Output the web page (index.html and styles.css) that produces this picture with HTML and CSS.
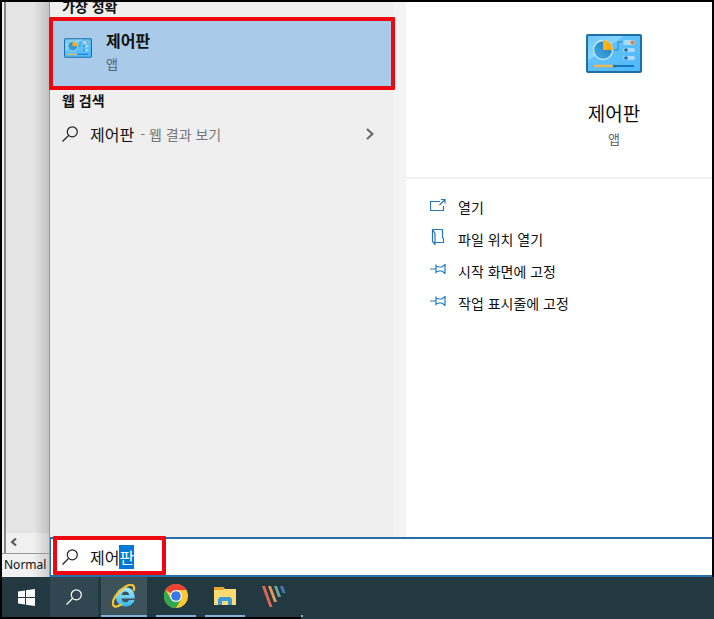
FILE: index.html
```html
<!DOCTYPE html>
<html lang="ko">
<head>
<meta charset="utf-8">
<title>제어판 - 검색</title>
<link rel="stylesheet" href="styles.css">
</head>
<body>
<svg class="defs" aria-hidden="true">
  <defs>
    <linearGradient id="board" x1="0" y1="0" x2="1" y2="1"><stop offset="0" stop-color="#6bc6f6"/><stop offset=".35" stop-color="#86d6ff"/><stop offset=".36" stop-color="#62c2f8"/><stop offset="1" stop-color="#4db8fb"/></linearGradient>
    <linearGradient id="pie" x1="0" y1="1" x2="1" y2="0"><stop offset="0" stop-color="#4db0e8"/><stop offset="1" stop-color="#1777b8"/></linearGradient>
    <linearGradient id="ie" x1="0" y1="0" x2="0" y2="1"><stop offset="0" stop-color="#a5ecff"/><stop offset="1" stop-color="#35b6ee"/></linearGradient>
    <symbol id="panel-icon" viewBox="0 0 56 39">
      <rect x="1" y="1" width="54" height="37" rx="1" fill="url(#board)" stroke="#1d6fa5" stroke-width="2"/>
      <circle cx="17" cy="16" r="9.500" fill="url(#pie)" stroke="#c5eaff" stroke-width="1.300"/>
      <path d="M17 16V6a10 10 0 0 1 10 10z" fill="#fdaf17"/>
      <path d="M28 16h4V8h5" fill="none" stroke="#2787c4" stroke-width="1"/>
      <g fill="#a9dcfa"><rect x="37" y="6" width="12" height="5" rx="2.500"/><rect x="37" y="14" width="12" height="4" rx="2"/><rect x="37" y="22" width="12" height="4" rx="2"/></g>
      <circle cx="46.500" cy="8.500" r="2" fill="#ef7c26"/><g fill="#146aaa"><circle cx="40" cy="16" r="1.800"/><circle cx="40" cy="24" r="1.800"/></g>
      <path d="M8 32h19" stroke="#e9b75d" stroke-width="2.500"/><path d="M29 32h19" stroke="#1675bd" stroke-width="2"/><circle cx="28.500" cy="32" r="1.600" fill="#1675bd"/>
    </symbol>
    <symbol id="search-icon" viewBox="0 0 16 16"><path d="M6.300 9.800.5 15.500" /><circle cx="10.300" cy="5.800" r="5"/></symbol>
    <symbol id="pin-icon" viewBox="0 0 16 10"><path d="M0 5h6M6 .5v9M6 2l3 1h3l3-2.500v9L12 7H9L6 8"/></symbol>
  </defs>
</svg>
<div class="screen">
  <div class="workspace">
    <div class="editor" aria-hidden="true">
      <div class="document"></div>
      <div class="scrollbar"><svg width="8" height="8" viewBox="0 0 8 8"><path d="M6 .5 2 4l4 3.500"/></svg></div>
      <div class="status">Normal t</div>
    </div>
    <main class="search">
      <div class="content">
        <section class="results">
          <h2 class="group first">가장 정확</h2>
          <button class="best">
            <svg class="small-panel"><use href="#panel-icon"/></svg>
            <span class="labels"><b>제어판</b><small>앱</small></span>
          </button>
          <h2 class="group">웹 검색</h2>
          <button class="web">
            <svg class="glass"><use href="#search-icon"/></svg>
            <span class="term">제어판</span><span class="hint">- 웹 결과 보기</span>
            <svg class="chevron" viewBox="0 0 8 12"><path d="m1 1 5.500 5L1 11"/></svg>
          </button>
        </section>
        <section class="details">
          <header class="hero">
            <svg class="large-panel"><use href="#panel-icon"/></svg>
            <h1>제어판</h1>
            <p>앱</p>
          </header>
          <nav class="actions">
            <button><svg viewBox="0 0 16 16"><path d="M10 4.500H.5v9h13V9M9.500 8 15 2.500M11 2.500h4v4"/></svg>열기</button>
            <button><svg viewBox="0 0 16 16"><path d="M5 13.500h8.500v-4l-1-1V.5h-10M2.500.5v12L5 15.500v-11z"/></svg>파일 위치 열기</button>
            <button><svg viewBox="0 -3 16 16"><use href="#pin-icon" width="16" height="10"/></svg>시작 화면에 고정</button>
            <button><svg viewBox="0 -3 16 16"><use href="#pin-icon" width="16" height="10"/></svg>작업 표시줄에 고정</button>
          </nav>
        </section>
      </div>
      <div class="query">
        <label class="field" for="q"><svg class="glass"><use href="#search-icon"/></svg><input id="q" type="text" value="제어판" aria-label="검색" autocomplete="off" spellcheck="false" autofocus></label>
      </div>
    </main>
  </div>
  <footer class="taskbar">
    <div class="apps">
      <button class="start" aria-label="시작"><svg width="17" height="17" viewBox="0 0 17 17"><path fill="#fff" d="M0 2.500 7 1.500V8H0zM8 1.300 17 0v8H8zM0 9h7v6.500l-7-1zM8 9h9v8l-9-1.300z"/></svg></button>
      <button class="find" aria-label="검색"><svg class="glass"><use href="#search-icon"/></svg></button>
      <button class="app active" aria-label="Internet Explorer"><svg width="24" height="24" viewBox="0 0 24 24"><path d="M22.500 16c-1.300 4-4.500 6.500-9 6.500-5.500 0-9.500-4-9.500-9.500S8 3.500 13.500 3.500c6 0 9.500 4.500 9.200 11H9.500c.3 2.500 1.800 3.800 4.200 3.800 1.500 0 2.700-.8 3.300-2.300zM9.600 11h7.600c-.2-2.300-1.500-3.500-3.700-3.500S10 8.700 9.600 11z" fill="url(#ie)"/><path d="M21.500 7C23.500 1.500 20-1.500 13 3 4 9-1 18 1.500 21.500c1.500 2 5 .8 8.500-1.500" fill="none" stroke="#f5c52d" stroke-width="2.200"/></svg></button>
      <button class="app" aria-label="Chrome"><svg width="24" height="24" viewBox="0 0 24 24"><circle cx="12" cy="12" r="12" fill="#fcc934"/><path d="M12 12 1.600 6A12 12 0 0 1 22.400 6H12z" fill="#ea4335"/><path d="M1.600 6A12 12 0 0 0 12 24l5.200-9L12 12 6.800 15z" fill="#2da94f"/><circle cx="12" cy="12" r="6" fill="#fff"/><circle cx="12" cy="12" r="4.800" fill="#3978e6"/></svg></button>
      <button class="app" aria-label="파일 탐색기"><svg width="22" height="18" viewBox="0 0 22 18"><path d="M0 0h9l2 2h11v16H0z" fill="#ffda72"/><path d="M0 0h9l1.500 1.500L9 3H0z" fill="#e3a52d"/><path d="M4 18v-6l2-2h10l2 2v6h-4v-4H8v4z" fill="#399bd9"/></svg></button>
      <button class="app plain" aria-label="편집기"><svg width="24" height="23" viewBox="0 0 24 23"><path fill="#df6853" d="M0 1h3l7.500 21h-3z"/><path fill="#e79a54" d="M6 1h3l6 16h-3z"/><path fill="#69a69b" d="M12 1h3l4 11h-3z"/><path fill="#4679b5" d="M18 1h3l2.500 7h-3z"/></svg></button>
    </div>
    <div class="next-app"></div>
  </footer>
</div>
<div class="mark mark-result"></div>
<div class="mark mark-query"></div>
<script src="app.js"></script>
</body>
</html>
```
FILE: styles.css
```css
* { box-sizing: border-box; }
body { margin: 0; font-family: "Noto Sans CJK KR", "Noto Sans", sans-serif; color: #111; font-size: 14px; overflow: hidden; }
button { border: 0; padding: 0; margin: 0; background: none; font: inherit; color: inherit; text-align: left; }
h1, h2, p { margin: 0; font-weight: 400; }
.defs { position: absolute; width: 0; height: 0; }
.screen { min-height: 100vh; display: flex; flex-direction: column; background: #223942; }
.workspace { flex: 1; display: flex; border: 2px solid #000; border-bottom: 0; }
.editor { width: 47px; overflow: hidden; display: flex; flex-direction: column; background: #eee; white-space: nowrap; }
.document { flex: 1; margin-left: 2px; border-left: 2px solid #858585; background: linear-gradient(90deg, #e4e4e4 65%, #c2c2c2); }
.scrollbar { height: 20px; margin-left: 2px; padding: 5px 0 0 4px; border-left: 2px solid #858585; background: linear-gradient(90deg, #f0f0f0 65%, #cecece); }
.scrollbar svg { display: block; fill: none; stroke: #555; stroke-width: 2; }
.status { height: 24px; padding-left: 2px; border-top: 1px solid #999; font: 12px/22px "Noto Sans", sans-serif; background: linear-gradient(90deg, #f1f1f1 65%, #cecece); }
.search { flex: 1; display: flex; flex-direction: column; min-width: 0; border-left: 1px solid #999; }
.content { flex: 1; display: flex; background: #f4f4f4; }
.results { flex: 0 1 344px; background: #efefef; }
.group { font-size: 14px; line-height: 24px; font-weight: 700; padding-left: 12px; }
.first { height: 16px; line-height: 8px; }
.best { display: flex; align-items: flex-start; gap: 14px; width: 100%; height: 70px; padding: 20px 14px 0; background: #a9cbe9; }
.small-panel { width: 28px; height: 20px; }
.labels { display: flex; flex-direction: column; margin-top: -10px; }
.labels b { font-size: 16px; line-height: 24px; font-weight: 700; }
.labels small { font-size: 13px; line-height: 24px; color: #536472; }
.web { display: flex; align-items: center; width: 100%; height: 44px; padding: 0 20px 0 12px; }
.glass { width: 16px; height: 16px; fill: none; stroke: #222; stroke-width: 1.2; }
.term { margin-left: 12px; font-size: 16px; }
.hint { margin-left: 6px; color: #777; }
.chevron { width: 8px; height: 12px; margin-left: auto; fill: none; stroke: #666; stroke-width: 2; }
.details { flex: 1; margin-left: 12px; background: #fff; }
.hero { display: flex; flex-direction: column; align-items: center; height: 177px; padding: 32px 0 0 110px; border-bottom: 2px solid #efefef; }
.large-panel { width: 56px; height: 39px; }
.hero h1 { margin-top: 26px; font-size: 19px; line-height: 28px; }
.hero p { font-size: 13px; line-height: 24px; color: #666; }
.actions { display: flex; flex-direction: column; padding: 12px 24px; }
.actions button { display: flex; align-items: center; gap: 12px; height: 32px; }
.actions svg { width: 16px; height: 16px; margin-bottom: 4px; fill: none; stroke: #2478b8; stroke-width: 1.2; }
.query { height: 40px; display: flex; border: 2px solid #2570a8; border-right: 0; border-left-width: 1px; background: #fff; }
.field { display: flex; flex: 1; align-items: center; padding-left: 11px; gap: 12px; }
.field input { flex: 1; min-width: 0; height: 28px; padding: 0; border: 0; outline: 0; font: 16px "Noto Sans CJK KR", sans-serif; color: #111; background: none; }
.field input::selection { background: #0078d7; color: #fff; }
.taskbar { display: flex; height: 42px; padding-left: 2px; background: #223942; box-shadow: inset 2px 0 #000; }
.apps { display: flex; height: 42px; width: 299px; border-bottom: 2px solid #000; box-shadow: -2px 0 #000; }
.apps button { display: flex; align-items: center; justify-content: center; }
.start, .find { width: 48px; }
.find { background: #304650; }
.find .glass { stroke: #fff; }
.apps .app { width: 40px; margin-left: 9px; border-bottom: 2px solid #83b3dd; }
.apps .active { width: 46px; margin-left: 3px; background: #3e525c; }
.app + .app { border-bottom-color: #83b3dd; }
.apps .plain { border-bottom-color: transparent; }
.next-app { width: 2px; height: 40px; border-bottom: 2px solid #83b3dd; }
.mark { position: absolute; border: 4px solid #ed0711; border-radius: 1px; pointer-events: none; }
.mark-result { left: 49px; top: 17px; width: 346px; height: 73px; }
.mark-query { left: 53px; top: 536px; width: 113px; height: 39px; }
```
FILE: app.js
```js
const query = document.getElementById('q');
query.focus();
query.setSelectionRange(2, 3);
```
